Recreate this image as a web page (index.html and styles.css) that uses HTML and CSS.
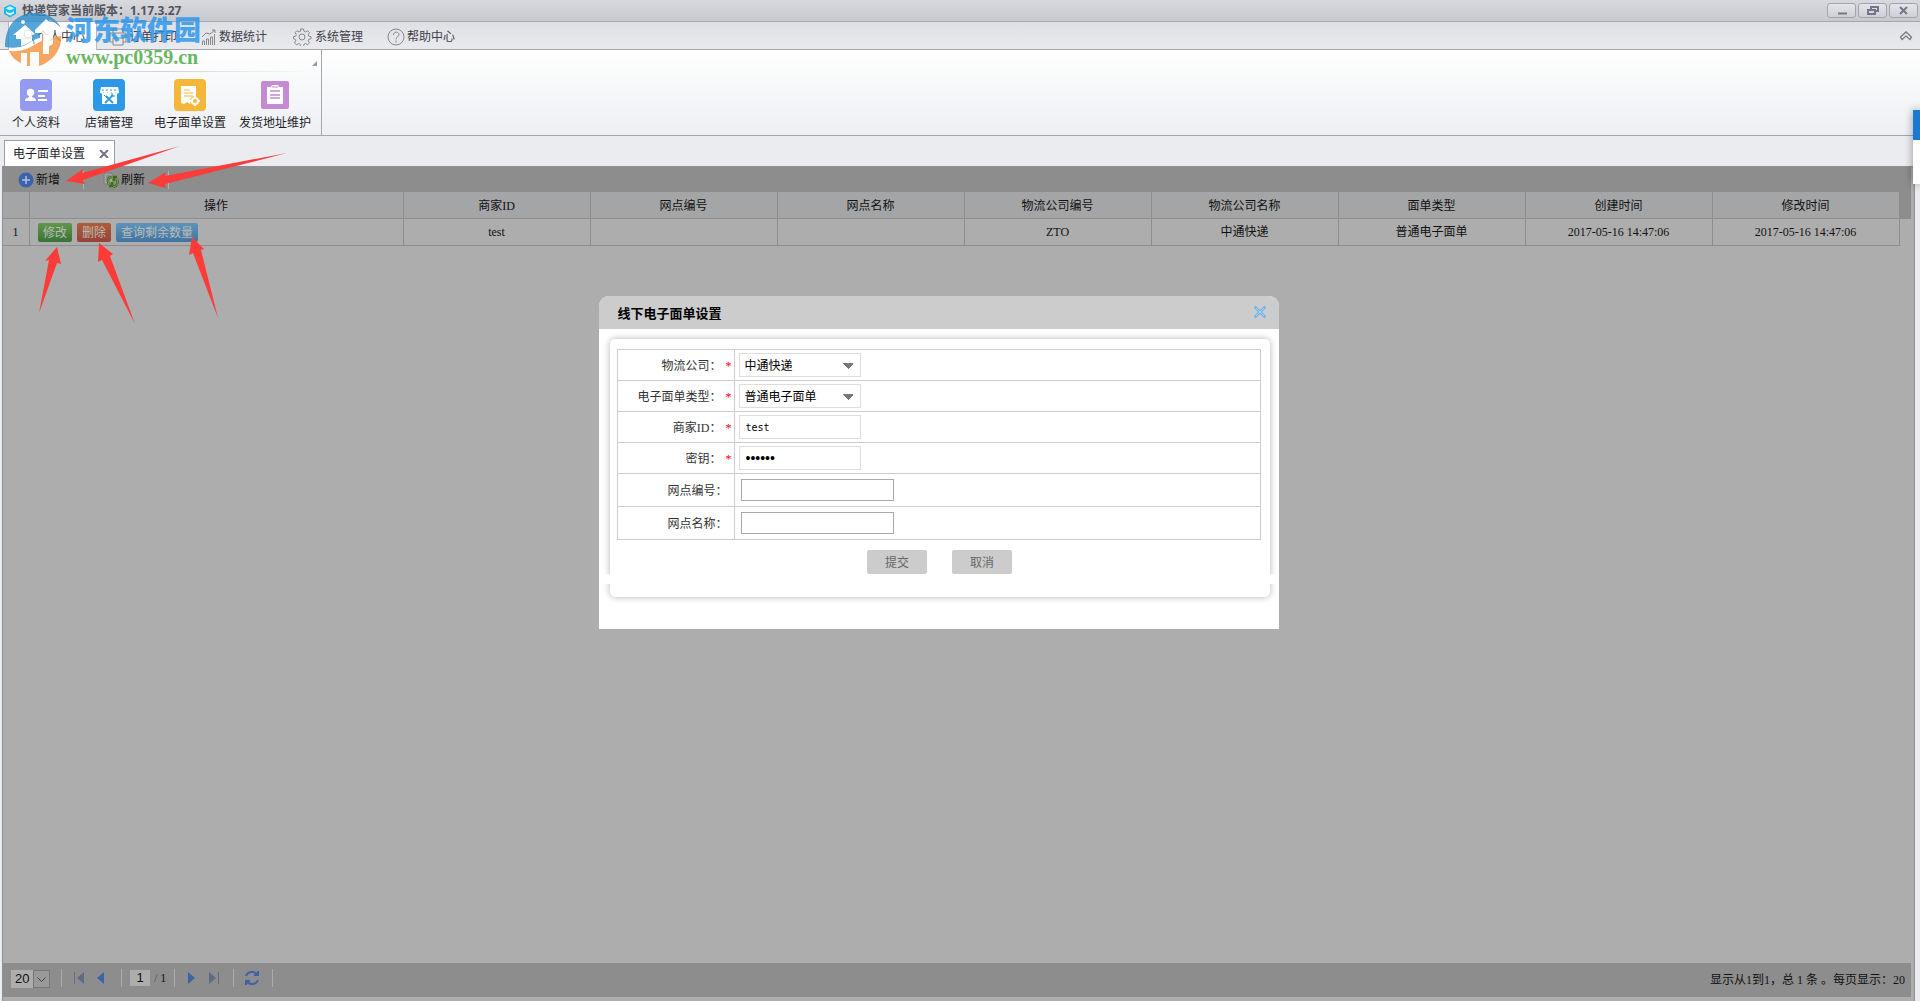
FILE: index.html
```html
<!DOCTYPE html>
<html lang="zh-CN">
<head>
    <meta charset="UTF-8">
    <meta name="viewport" content="width=device-width, initial-scale=1.0">
    <title>快递管家</title>
    <link rel="stylesheet" href="styles.css">
</head>
<body>
    <header class="titlebar">
        <svg class="app-icon" width="14" height="14" viewBox="0 0 14 14">
            <path d="M7 0.500 L13 3.500 V10 L7 13.500 L1 10 V3.500 Z" fill="#12b8f5"/>
            <path d="M7 2 L11.500 4.500 L7 6.500 L2.500 4.500 Z" fill="#b8f4ff"/>
            <path d="M3 7 Q7 11 11 7 V9.500 L7 11.500 L3 9.500 Z" fill="#e9fbff"/>
        </svg>
        <h1>快递管家当前版本：1.17.3.27</h1>
        <div class="window-buttons">
            <button type="button" aria-label="最小化"><svg width="14" height="10"><path d="M3 7.500h9" stroke="#75758a" stroke-width="2"/></svg></button>
            <button type="button" aria-label="还原"><svg width="14" height="10" fill="none" stroke="#75758a" stroke-width="2"><path d="M5 3V1h7v4h-3"/><path d="M2 4h7v4H2z"/></svg></button>
            <button type="button" aria-label="关闭"><svg width="14" height="10"><path d="M3 1l7 7M10 1l-7 7" stroke="#75758a" stroke-width="2"/></svg></button>
        </div>
    </header>

    <nav class="menu">
        <a href="#" class="active">
            <svg width="15" height="16" viewBox="0 0 15 16" fill="none" stroke="#777"><circle cx="8" cy="5" r="4"/><path d="M1 15c0-4 3-6 7-6s6 2 6 6"/></svg>
            <span>个人中心</span>
        </a>
        <a href="#">
            <svg width="18" height="18" viewBox="0 0 18 18" fill="none" stroke="#888"><path d="M4 5V1h10v4M4 14H1V5h16v9h-3M4 10h10v7H4z"/></svg>
            <span>订单打印</span>
        </a>
        <a href="#">
            <svg width="16" height="16" viewBox="0 0 16 16" fill="none" stroke="#888"><path d="M1.500 16v-4h2v4M5.500 16v-6h2v6M9.500 16V8h2v8M13.500 16V5M1 8l4-4 4 1 5-4M11 1h3v3"/></svg>
            <span>数据统计</span>
        </a>
        <a href="#">
            <svg width="22" height="18" viewBox="-2 0 22 18" fill="none" stroke="#888"><circle cx="9" cy="9" r="3"/><path d="M7.500 1h3l.5 2.300 1.500.7 2-1.300 2 2-1.300 2 .6 1.500 2.200.5v2l-2.200.6-.6 1.500 1.300 2-2 2-2-1.300-1.500.7-.5 2.300h-3l-.5-2.300-1.500-.7-2 1.300-2-2 1.300-2-.6-1.500L.500 10.700v-2l2.200-.5.6-1.500-1.300-2 2-2 2 1.300 1.500-.7z"/></svg>
            <span>系统管理</span>
        </a>
        <a href="#">
            <svg width="18" height="18" viewBox="0 0 18 18" fill="none" stroke="#888"><circle cx="9" cy="9" r="8"/><path d="M6.500 7c0-4 5.500-3.500 5.500-.500 0 2-3 2.500-3 5M9 12.500v2"/></svg>
            <span>帮助中心</span>
        </a>
        <button type="button" class="fold" aria-label="收起">
            <svg width="14" height="10" viewBox="0 0 14 10" fill="none" stroke="#777b86" stroke-width="1.300"><path d="M1.500 6L7 1l5.500 5-1.500 2.500L7 5 3 8.500z"/></svg>
        </button>
    </nav>

    <section class="ribbon">
        <div class="ribbon-group">
            <button type="button">
                <svg width="32" height="32" viewBox="0 0 32 32"><rect width="32" height="32" rx="4" fill="#9499f1"/><circle cx="10.500" cy="13.500" r="3.700" fill="#fff"/><path d="M5 22c0-3 2-3 4-4v-2h3v2c2 1 4 1 4 4z" fill="#fff"/><path d="M18 12h10M18 17h7M18 21h9" stroke="#fff" stroke-width="2"/></svg>
                <span>个人资料</span>
            </button>
            <button type="button">
                <svg width="32" height="32" viewBox="0 0 32 32"><rect width="32" height="32" rx="4" fill="#2b98e8"/><path d="M8 8h17l1 5c0 2-3 2-3.500 0-.5 2-3.500 2-4 0-.5 2-3.500 2-4 0-.5 2-3.500 2-4 0-.5 2-3.500 2-3.500 0z" fill="#fff"/><path d="M9 14h15v11H9z" fill="#fff"/><path d="M9 11h15" stroke="#2b98e8" stroke-dasharray="2 2"/><path d="M13 17l7 7M20 16l-8 8" stroke="#2b98e8" stroke-width="1.800"/><path d="M11 16l3 3M19 14v3h3" stroke="#2b98e8" fill="none"/></svg>
                <span>店铺管理</span>
            </button>
            <button type="button">
                <svg width="32" height="32" viewBox="0 0 32 32"><rect width="32" height="32" rx="4" fill="#f5b73a"/><path d="M7 7h15v18l-3-2-3 2-3-2-3 2-3-1z" fill="#fff"/><path d="M10 11h6M10 14h9M10 17h9" stroke="#f5b73a"/><circle cx="21" cy="22" r="5" fill="#f5b73a"/><circle cx="21" cy="22" r="3" fill="none" stroke="#fff" stroke-width="2"/><path d="M21 17v2M21 25v2M16 22h2M24 22h2" stroke="#fff" stroke-width="2"/></svg>
                <span>电子面单设置</span>
            </button>
            <button type="button">
                <svg width="32" height="32" viewBox="0 0 32 32"><rect x="2" y="2" width="28" height="28" rx="2" fill="#c48bd2"/><path d="M8 8h4l1-2h6l1 2h4v17H8z" fill="#fff"/><path d="M11 12h10M11 16h10M11 19h10" stroke="#c48bd2" stroke-width="1.500"/><path d="M13 8h6" stroke="#c48bd2"/></svg>
                <span>发货地址维护</span>
            </button>
        </div>
    </section>

    <div class="tabs">
        <div class="tab">
            <span>电子面单设置</span>
            <button type="button" aria-label="关闭标签"><svg width="10" height="8"><path d="M1 0l8 8M9 0L1 8" stroke="#71717f" stroke-width="2"/></svg></button>
        </div>
    </div>

    <main class="panel">
        <div class="toolbar">
            <button type="button" class="add">
                <svg width="16" height="16" viewBox="0 0 16 16"><circle cx="8" cy="8" r="7.500" fill="#3b62ad"/><path d="M8 4v8M4 8h8" stroke="#b4bfd4" stroke-width="1.500"/></svg>
                <span>新增</span>
            </button>
            <button type="button" class="refresh">
                <svg width="16" height="16" viewBox="0 0 16 16" fill="none"><path d="M1 1h7l2 2v9H1z" fill="#a2a2a2" stroke="#7b7b7b"/><path d="M3 4h5M3 6h4M3 8h3" stroke="#7b7b7b"/><path d="M9 5c-4 0-5 4-3 7M6 14h3v-4M10 15c5-1 5-5 4-8M14 5h-3v4" stroke="#3b6b16" stroke-width="2.500"/><path d="M9 5c-4 0-5 4-3 7M10 15c5-1 5-5 4-8" stroke="#7fae55"/></svg>
                <span>刷新</span>
            </button>
        </div>

        <div class="grid-wrap">
            <table class="grid">
                <colgroup>
                    <col class="col-no">
                    <col class="col-action">
                    <col span="8">
                </colgroup>
                <thead>
                    <tr>
                        <th></th>
                        <th>操作</th>
                        <th>商家ID</th>
                        <th>网点编号</th>
                        <th>网点名称</th>
                        <th>物流公司编号</th>
                        <th>物流公司名称</th>
                        <th>面单类型</th>
                        <th>创建时间</th>
                        <th>修改时间</th>
                    </tr>
                </thead>
                <tbody>
                    <tr>
                        <td>1</td>
                        <td>
                            <div class="actions">
                                <button type="button" class="edit">修改</button>
                                <button type="button" class="delete">删除</button>
                                <button type="button" class="query">查询剩余数量</button>
                            </div>
                        </td>
                        <td>test</td>
                        <td></td>
                        <td></td>
                        <td>ZTO</td>
                        <td>中通快递</td>
                        <td>普通电子面单</td>
                        <td>2017-05-16 14:47:06</td>
                        <td>2017-05-16 14:47:06</td>
                    </tr>
                </tbody>
            </table>
        </div>

        <div class="pager">
            <div class="pager-group">
                <div class="page-size">
                    <select aria-label="每页条数"><option>20</option></select>
                    <svg width="17" height="18"><path d="M3.500 6.500l4 4 4-4" fill="none" stroke="#444"/></svg>
                </div>
            </div>
            <div class="pager-group nav-prev">
                <button type="button" aria-label="第一页"><svg width="12" height="12"><path d="M1.500 0v12" stroke="#5e6a86"/><path d="M11 0v12L4 6z" fill="#5e6a86"/></svg></button>
                <button type="button" aria-label="上一页"><svg width="12" height="12"><path d="M9 0v12L2 6z" fill="#3f62a5"/></svg></button>
            </div>
            <div class="pager-group nav-page">
                <input type="text" value="1" aria-label="页码">
                <span><i>/</i> 1</span>
            </div>
            <div class="pager-group nav-next">
                <button type="button" aria-label="下一页"><svg width="12" height="12"><path d="M2 0v12l7-6z" fill="#3f62a5"/></svg></button>
                <button type="button" aria-label="最后一页"><svg width="12" height="12"><path d="M1 0v12l7-6z" fill="#5e6a86"/><path d="M10.500 0v12" stroke="#5e6a86"/></svg></button>
            </div>
            <div class="pager-group nav-reload">
                <button type="button" aria-label="刷新列表"><svg width="16" height="16" viewBox="0 0 16 16" fill="none" stroke="#3f62a5" stroke-width="2"><path d="M2 6c2-5 8-5 11-2M14 10c-2 5-8 5-11 2"/><path d="M14 1v4h-4M2 15v-4h4"/></svg></button>
            </div>
            <p class="pager-info">显示从1到1，总 1 条 。每页显示：20</p>
        </div>

        <div class="modal-layer">
            <form class="modal">
                <div class="modal-head">
                    <h2>线下电子面单设置</h2>
                    <button type="button" aria-label="关闭"><svg width="12" height="12"><path d="M1.500 1.500l9 9M10.500 1.500l-9 9" stroke="#74b5ea" stroke-width="3" stroke-linecap="round"/><path d="M2 2l8 8M10 2l-8 8" stroke="#a5d4f8"/></svg></button>
                </div>
                <div class="modal-box">
                    <table class="form-table">
                        <tr>
                            <th><label for="company">物流公司：</label><em>*</em></th>
                            <td><select id="company" class="field"><option>中通快递</option></select></td>
                        </tr>
                        <tr>
                            <th><label for="type">电子面单类型：</label><em>*</em></th>
                            <td><select id="type" class="field"><option>普通电子面单</option></select></td>
                        </tr>
                        <tr>
                            <th><label for="shop">商家ID：</label><em>*</em></th>
                            <td><input id="shop" class="field mono" type="text" value="test"></td>
                        </tr>
                        <tr>
                            <th><label for="secret">密钥：</label><em>*</em></th>
                            <td><input id="secret" class="field secret" type="password" value="123456" autocomplete="off"></td>
                        </tr>
                        <tr class="tall">
                            <th><label for="siteNo">网点编号：</label></th>
                            <td><input id="siteNo" class="plain" type="text"></td>
                        </tr>
                        <tr class="tall">
                            <th><label for="siteName">网点名称：</label></th>
                            <td><input id="siteName" class="plain" type="text"></td>
                        </tr>
                    </table>
                    <div class="modal-buttons">
                        <button type="button">提交</button>
                        <button type="button">取消</button>
                    </div>
                </div>
            </form>
        </div>
    </main>

    <!-- floating side bar on the right edge -->
    <aside class="side-tip"></aside>

    <!-- pointers to the toolbar and row buttons -->
    <svg class="arrows" width="300" height="330" fill="#fd3b38">
        <path d="M66 181L83 169L82 173L180 146L83 180L85 184Z"/>
        <path d="M148 183L166 172L165 176L287 153L165 184L166 188Z"/>
        <path d="M57 247L45 261L49 260L39 313L57 263L61 264Z"/>
        <path d="M99 243L98 262L102 260L135 324L110 256L113 254Z"/>
        <path d="M192 237L189 255L193 253L218 318L201 250L204 249Z"/>
    </svg>

    <div class="watermark">
        <svg width="58" height="54" viewBox="0 0 58 54">
            <!-- blue sky -->
            <path d="M0 34C0 12 12 0 30 0c12 0 21 5 26 15-4-4-7-6-11-8L31 17h4v8c-7 1-12 7-20 9-5 1-10 1-15 0z" fill="#2c8fd0"/>
            <!-- orange ground -->
            <path d="M4 38c14 1 20-3 27-7 8-5 15-7 25-8 1 14-9 26-22 30V39h-9v14h-3V40h-6v10C11 48 6 43 4 38z" fill="#f6923a"/>
            <!-- white houses -->
            <path d="M8 22L20 12l10 9-3 1v6c-4 2-7 4-11 5v-7h-5v-4z" fill="#fff"/>
            <path d="M30 17L41 6l12 11h-5v14l-4 2v8h-6V20h-8z" fill="#fff"/>
            <circle cx="18" cy="9" r="2" fill="#fff"/>
        </svg>
        <div>
            <strong>河东软件园</strong>
            <b>www.pc0359.cn</b>
        </div>
    </div>
</body>
</html>
```
FILE: styles.css
```css
* {
    box-sizing: border-box;
}

body {
    margin: 0;
    min-height: 100vh;
    display: flex;
    flex-direction: column;
    background: #ebecf0;
    color: #1e1e2a;
    font: 12px/16px "Liberation Sans", "Noto Sans CJK SC", sans-serif;
}

button,
input,
select {
    margin: 0;
    padding: 0;
    border: 0;
    background: none;
    color: inherit;
    font: inherit;
}

svg {
    display: block;
    flex: none;
}

h1,
h2,
p {
    margin: 0;
}

/* title bar */
.titlebar {
    display: flex;
    align-items: center;
    height: 22px;
    padding: 0 2px 0 3px;
    gap: 5px;
    border-bottom: 1px solid #a5a6ae;
    background: linear-gradient(#d8d9dd, #c8c9ce);
}

.titlebar h1 {
    color: #55555f;
    font: bold 12px/20px "Open Sans", "Noto Sans CJK SC", sans-serif;
}

.window-buttons {
    display: flex;
    gap: 2px;
    margin-left: auto;
}

.window-buttons button {
    display: flex;
    align-items: center;
    justify-content: center;
    width: 29px;
    height: 15px;
    border: 1px solid #a2a3ae;
    border-radius: 3px;
    background: linear-gradient(#e4e5e9, #cfd0d6);
}

/* menu */
.menu {
    display: flex;
    height: 28px;
    padding-left: 8px;
    border-bottom: 1px solid #a5a6ae;
    background: linear-gradient(#dfe0e5, #e9eaed);
}

.menu a {
    display: flex;
    align-items: center;
    height: 28px;
    padding: 1px 11px 0;
    gap: 2px;
    color: #40404a;
    text-decoration: none;
}

.menu a + a {
    padding: 1px 12px 0;
}

.menu a.active {
    border: solid #b7b8c0;
    border-width: 0 1px;
    background: #fff;
}

.fold {
    margin: 0 7px 0 auto;
}

/* ribbon */
.ribbon {
    display: flex;
    height: 86px;
    border-bottom: 1px solid #a5a6ae;
    background: linear-gradient(#fff, #edeff3);
}

.ribbon-group {
    position: relative;
    display: grid;
    grid-template-columns: 72px 74px 88px 82px;
    width: 322px;
    padding-top: 29px;
    border-right: 1px solid #a5a6ae;
}

.ribbon-group::before {
    content: "";
    position: absolute;
    top: 21px;
    right: 8px;
    left: 8px;
    height: 1px;
    background: linear-gradient(90deg, transparent, #d0d1d5, transparent);
}

.ribbon-group::after {
    content: "";
    position: absolute;
    top: 11px;
    right: 4px;
    border: solid transparent;
    border-width: 0 0 5px 5px;
    border-bottom-color: #9a9aa5;
}

.ribbon-group button {
    display: flex;
    flex-direction: column;
    align-items: center;
    gap: 4px;
    white-space: nowrap;
}

/* tabs */
.tabs {
    display: flex;
    align-items: flex-end;
    height: 30px;
    padding-left: 4px;
}

.tab {
    display: flex;
    align-items: center;
    gap: 14px;
    height: 26px;
    padding: 0 5px 0 8px;
    border: 1px solid #9c9da9;
    border-bottom: 0;
    background: #fff;
}

/* work area */
.panel {
    position: relative;
    flex: 1;
    display: flex;
    flex-direction: column;
    margin: 0 5px 0 2px;
    padding: 0 3px 4px 0;
    border: solid #8e9097;
    border-width: 1px 1px 0;
    background: #adadad;
    color: #111;
    font-family: "Liberation Serif", "Noto Sans CJK SC", serif;
}

.toolbar {
    display: flex;
    height: 25px;
    padding-left: 15px;
    background: #8d8d8d;
}

.toolbar button {
    display: flex;
    align-items: center;
    gap: 2px;
    height: 18px;
    margin: 4px 19px 0 0;
    padding-right: 23px;
    border-right: 1px solid #b0b0b0;
}

.grid-wrap {
    padding-right: 11px;
    background: linear-gradient(#8d8d8d, #8d8d8d) right top / 11px 27px no-repeat;
}

.grid {
    width: 100%;
    border-collapse: separate;
    border-spacing: 0;
    table-layout: fixed;
    text-align: center;
}

.col-no {
    width: 27px;
}

.col-action {
    width: 374px;
}

.grid th,
.grid td {
    height: 27px;
    padding: 0 1px 0 0;
    border: solid #8d8d8d;
    border-width: 0 1px 1px 0;
    font-weight: normal;
}

.grid th {
    padding-top: 1px;
    background: #a4a5a7;
}

.actions {
    display: flex;
    gap: 5px;
    padding-left: 8px;
}

.actions button {
    height: 19px;
    padding: 1px 5px 0;
    border-radius: 2px;
    color: #b9bcb9;
    line-height: 18px;
}

.edit {
    background: linear-gradient(#62974b, #387336);
}

.delete {
    background: linear-gradient(#b05c3a, #954335);
}

.query {
    background: linear-gradient(#5f93ba, #40749f);
}

/* pager */
.pager {
    display: flex;
    align-items: center;
    height: 34px;
    margin-top: auto;
    padding: 0 6px 0 8px;
    background: #8d8d8d;
}

.pager-group {
    display: flex;
    align-items: center;
    height: 18px;
    margin-bottom: 4px;
    border-right: 1px solid #aaa;
}

.page-size {
    position: relative;
    margin: 2px 11px 0 0;
}

.page-size select {
    display: block;
    width: 39px;
    height: 18px;
    padding-left: 4px;
    background: #adadad;
    font: 13px/18px "Liberation Sans", sans-serif;
    appearance: none;
}

.page-size svg {
    position: absolute;
    top: 0;
    right: 0;
    border: 1px solid #777;
    background: #999;
    pointer-events: none;
}

.nav-prev {
    gap: 10px;
    padding: 0 14px 0 11px;
}

.nav-page {
    gap: 4px;
    padding: 0 8px;
}

.nav-page input {
    width: 20px;
    height: 16px;
    background: #adadad;
    font: 13px/16px "Liberation Sans", sans-serif;
    text-align: center;
}

.nav-page i {
    color: #555;
    font-style: normal;
}

.nav-next {
    gap: 10px;
    padding: 0 13px 0 11px;
}

.nav-reload {
    padding: 0 12px 0 10px;
}

.pager-info {
    margin-left: auto;
}

/* dialog */
.modal-layer {
    position: absolute;
    top: 129px;
    right: 0;
    left: 0;
    display: flex;
    justify-content: center;
    padding-right: 40px;
}

.modal {
    width: 680px;
    padding-bottom: 32px;
    border-radius: 10px 10px 0 0;
    background: #fff;
    color: #333;
}

.modal-head {
    display: flex;
    justify-content: space-between;
    height: 33px;
    padding: 10px 13px 0 19px;
    border-radius: 10px 10px 0 0;
    background: #ccc;
}

.modal-head h2 {
    color: #000;
    font-size: 13px;
    line-height: 16px;
}

.modal-head button {
    height: 12px;
}

.modal-box {
    position: relative;
    margin: 10px 9px 0 11px;
    padding: 10px 9px 23px 7px;
    border-radius: 5px;
    box-shadow: 0 0 7px rgba(0, 0, 0, 0.3);
}

/* white strip between the form and its footer */
.modal-box::after {
    content: "";
    position: absolute;
    right: -8px;
    bottom: 13px;
    left: -8px;
    height: 10px;
    background: #fff;
}

.form-table {
    width: 100%;
    border-collapse: collapse;
}

.form-table th,
.form-table td {
    height: 31px;
    padding: 0 4px;
    border: 1px solid #ccc;
}

.form-table th {
    width: 117px;
    padding: 1px 2px 0 0;
    font-weight: normal;
    text-align: right;
}

.form-table .tall th,
.form-table .tall td {
    height: 33px;
}

.form-table .tall th {
    padding-right: 6px;
}

.form-table .tall td {
    padding-left: 6px;
}

.form-table em {
    display: inline-block;
    width: 10px;
    color: #f00;
    font-style: normal;
    text-align: right;
}

.field {
    display: block;
    width: 122px;
    height: 24px;
    padding: 0 6px;
    border: 1px solid #ddd;
    color: #000;
}

/* down arrow of the drop-downs */
select.field {
    padding: 1px 5px 0;
    appearance: none;
    background: conic-gradient(from -45deg at 50% 100%, #777 90deg, transparent 0) 103px 9px / 10px 6px no-repeat;
}

.mono {
    font-family: "DejaVu Sans Mono", monospace;
    font-size: 10px;
}

.secret {
    font-family: "Liberation Sans", sans-serif;
    font-size: 14px;
}

.plain {
    display: block;
    width: 153px;
    height: 22px;
    border: 1px solid #a9a9ae;
}

.modal-buttons {
    display: flex;
    justify-content: center;
    gap: 25px;
    margin-top: 10px;
    padding-left: 2px;
}

.modal-buttons button {
    width: 60px;
    height: 24px;
    padding-top: 1px;
    border-radius: 2px;
    background: #ccc;
    color: #666;
}

/* overlays */
.side-tip {
    position: absolute;
    top: 110px;
    right: 0;
    width: 7px;
    height: 74px;
    border-top: 30px solid #1a7ad2;
    background: #fff;
    box-shadow: 0 0 8px rgba(0, 0, 0, 0.4);
}

.arrows {
    position: absolute;
    top: 0;
    left: 0;
    pointer-events: none;
}

.watermark {
    position: absolute;
    top: 13px;
    left: 5px;
    display: flex;
    gap: 3px;
    opacity: 0.8;
    pointer-events: none;
}

.watermark strong,
.watermark b {
    display: block;
}

.watermark strong {
    color: #2394ec;
    font: 900 27px/32px "Noto Sans CJK SC", sans-serif;
}

.watermark b {
    color: #45a638;
    font: bold 20px/24px "Liberation Serif", serif;
}
```
